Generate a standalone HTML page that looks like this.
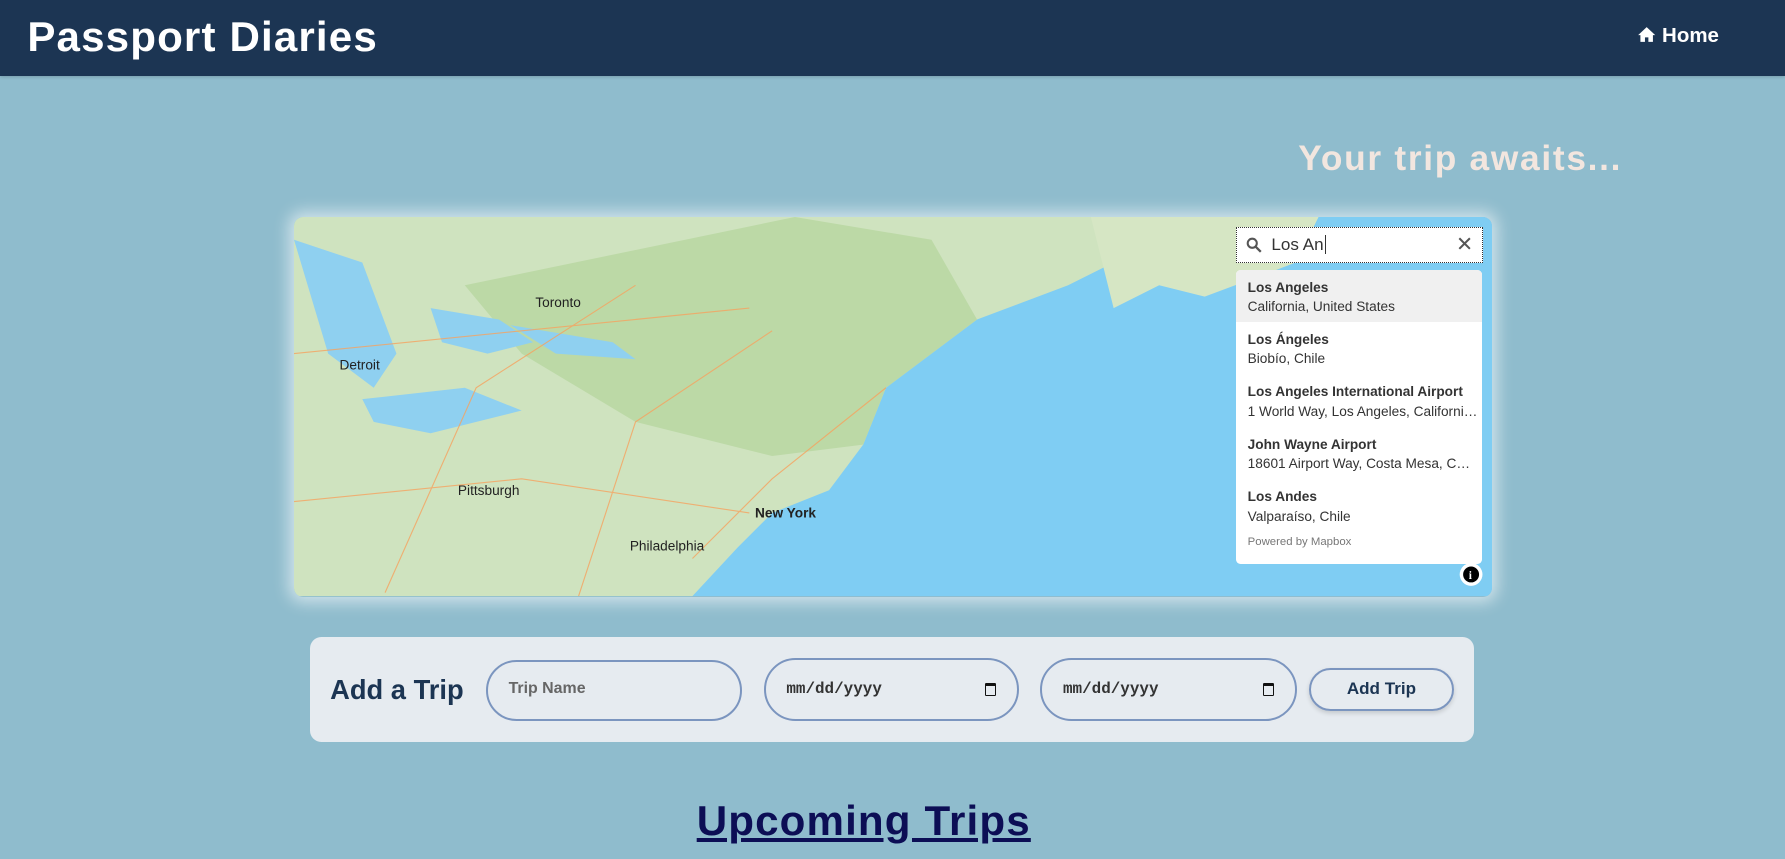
<!DOCTYPE html>
<html><head><meta charset="utf-8"><style>
*{box-sizing:border-box;margin:0;padding:0}
html,body{width:1785px;height:859px;overflow:hidden;background:#8fbccd}
#w{zoom:1.13839;width:1568px;height:755px;position:relative;font-family:"Liberation Sans",sans-serif}
.hdr{position:absolute;left:0;top:0;width:1568px;height:67px;background:#1c3553;box-shadow:0 1px 3px rgba(0,0,0,.2)}
.logo{position:absolute;left:24px;top:11px;font-size:37px;font-weight:bold;color:#fff;letter-spacing:1px}
.home{position:absolute;left:1438px;top:21px;font-size:18px;font-weight:bold;color:#fff}
.await{position:absolute;right:143px;top:122px;font-size:31px;font-weight:bold;color:#f2e6df;letter-spacing:1.5px}
.map{position:absolute;left:258px;top:191px;width:1053px;height:333px;border-radius:8px;overflow:hidden;box-shadow:0 0 14px 4px rgba(255,255,255,.6)}
.sb{position:absolute;left:1086px;top:199px;width:217px;height:32px;background:#fff;border:1px dotted #333;font-size:15px;color:#333}
.dd{position:absolute;left:1086px;top:237px;width:216px;height:258px;background:#fff;border-radius:4px;font-size:12px;color:#333;overflow:hidden}
.it{height:46px;padding:7px 10px;line-height:17px;white-space:nowrap}
.it b{display:block}
.form{position:absolute;left:272px;top:560px;width:1023px;height:92px;background:#e6ebf0;border-radius:10px}
.inp{position:absolute;border:2px solid #7b95bf;border-radius:28px;font-size:14px;color:#333}
.up{position:absolute;left:612px;top:700px;font-size:37px;font-weight:bold;color:#0c0e55;text-decoration:underline;letter-spacing:1px}
</style></head><body><div id="w">
<div class="hdr"><div class="logo">Passport Diaries</div>
<div class="home"><svg width="17" height="15" viewBox="0 0 17 15" style="vertical-align:-1px"><path d="M8.5 1 L1 8 H3 V14 H7 V10 H10 V14 H14 V8 H16 Z" fill="#fff"/></svg> Home</div></div>
<div class="await">Your trip awaits...</div>
<div class="map"><svg width="1053" height="333" viewBox="0 0 1053 333">
<rect width="1053" height="333" fill="#7fcdf3"/>
<path d="M0 0 H760 L720 40 L680 60 L600 90 L560 120 L520 150 L500 200 L470 240 L420 260 L390 290 L350 333 H0 Z" fill="#cfe3bf"/>
<path d="M700 0 H900 L880 40 L800 70 L760 60 L720 80 Z" fill="#d6e6c4"/>
<path d="M440 0 L560 20 L600 90 L560 120 L520 150 L500 200 L420 210 L300 180 L200 120 L150 60 Z" fill="#bcd9a6"/>
<path d="M120 80 L180 90 L210 110 L170 120 L130 110 Z M60 160 L150 150 L200 170 L120 190 L70 180 Z M190 95 L280 110 L300 125 L230 120 Z M0 20 L60 40 L90 120 L70 150 L30 120 Z" fill="#8fd0f0"/>
<g stroke="#f6a360" stroke-width="1" fill="none" opacity=".8"><path d="M0 250 L200 230 L400 260"/><path d="M80 330 L160 150 L300 60"/><path d="M250 333 L300 180 L420 100"/><path d="M350 300 L420 230 L520 150"/><path d="M0 120 L200 100 L400 80"/></g>
<text x="405" y="264" font-size="12" font-weight="bold" fill="#222" font-family="Liberation Sans">New York</text>
<text x="212" y="79" font-size="12" fill="#222" font-family="Liberation Sans">Toronto</text>
<text x="144" y="244" font-size="12" fill="#222" font-family="Liberation Sans">Pittsburgh</text>
<text x="295" y="293" font-size="12" fill="#222" font-family="Liberation Sans">Philadelphia</text>
<text x="40" y="134" font-size="12" fill="#222" font-family="Liberation Sans">Detroit</text>
<circle cx="1034" cy="314" r="10" fill="#fff"/><circle cx="1034" cy="314" r="7" fill="#000"/><text x="1032" y="318" font-size="10" font-weight="bold" fill="#fff" font-family="Liberation Serif">i</text>
</svg></div>
<div class="sb"><svg width="14" height="14" viewBox="0 0 14 14" style="position:absolute;left:8px;top:8px"><circle cx="5.5" cy="5.5" r="4" fill="none" stroke="#555" stroke-width="1.8"/><path d="M8.5 8.5 L13 13" stroke="#555" stroke-width="2"/></svg><span style="position:absolute;left:30px;top:7px">Los An<span style="border-left:1px solid #333;margin-left:1px"></span></span><span style="position:absolute;right:8px;top:4px;font-size:18px;color:#555">✕</span></div>
<div class="dd">
<div class="it" style="background:#f0f0f0"><b>Los Angeles</b>California, United States</div>
<div class="it"><b>Los Ángeles</b>Biobío, Chile</div>
<div class="it"><b>Los Angeles International Airport</b>1 World Way, Los Angeles, Californi…</div>
<div class="it"><b>John Wayne Airport</b>18601 Airport Way, Costa Mesa, C…</div>
<div class="it"><b>Los Andes</b>Valparaíso, Chile</div>
<div style="padding:4px 10px;font-size:10px;color:#777">Powered by Mapbox</div>
</div>
<div class="form">
<div style="position:absolute;left:18px;top:32px;font-size:24px;font-weight:bold;color:#1c3553">Add a Trip</div>
<div class="inp" style="left:155px;top:20px;width:225px;height:53px"><span style="position:absolute;left:18px;top:16px;color:#666;font-weight:bold;font-size:14px">Trip Name</span></div>
<div class="inp" style="left:399px;top:18px;width:224px;height:55px;font-family:'Liberation Mono',monospace;font-weight:bold"><span style="position:absolute;left:18px;top:18px">mm/dd/yyyy</span><span style="position:absolute;right:18px;top:20px;width:10px;height:12px;border:1.5px solid #111;border-top-width:3px;border-radius:1px"></span></div>
<div class="inp" style="left:642px;top:18px;width:225px;height:55px;font-family:'Liberation Mono',monospace;font-weight:bold"><span style="position:absolute;left:18px;top:18px">mm/dd/yyyy</span><span style="position:absolute;right:18px;top:20px;width:10px;height:12px;border:1.5px solid #111;border-top-width:3px;border-radius:1px"></span></div>
<div class="inp" style="left:878px;top:27px;width:127px;height:38px;box-shadow:0 2px 4px rgba(0,0,0,.15);text-align:center;line-height:34px;font-weight:bold;font-size:15px;color:#1c3553">Add Trip</div>
</div>
<div class="up">Upcoming Trips</div>
</div></body></html>
